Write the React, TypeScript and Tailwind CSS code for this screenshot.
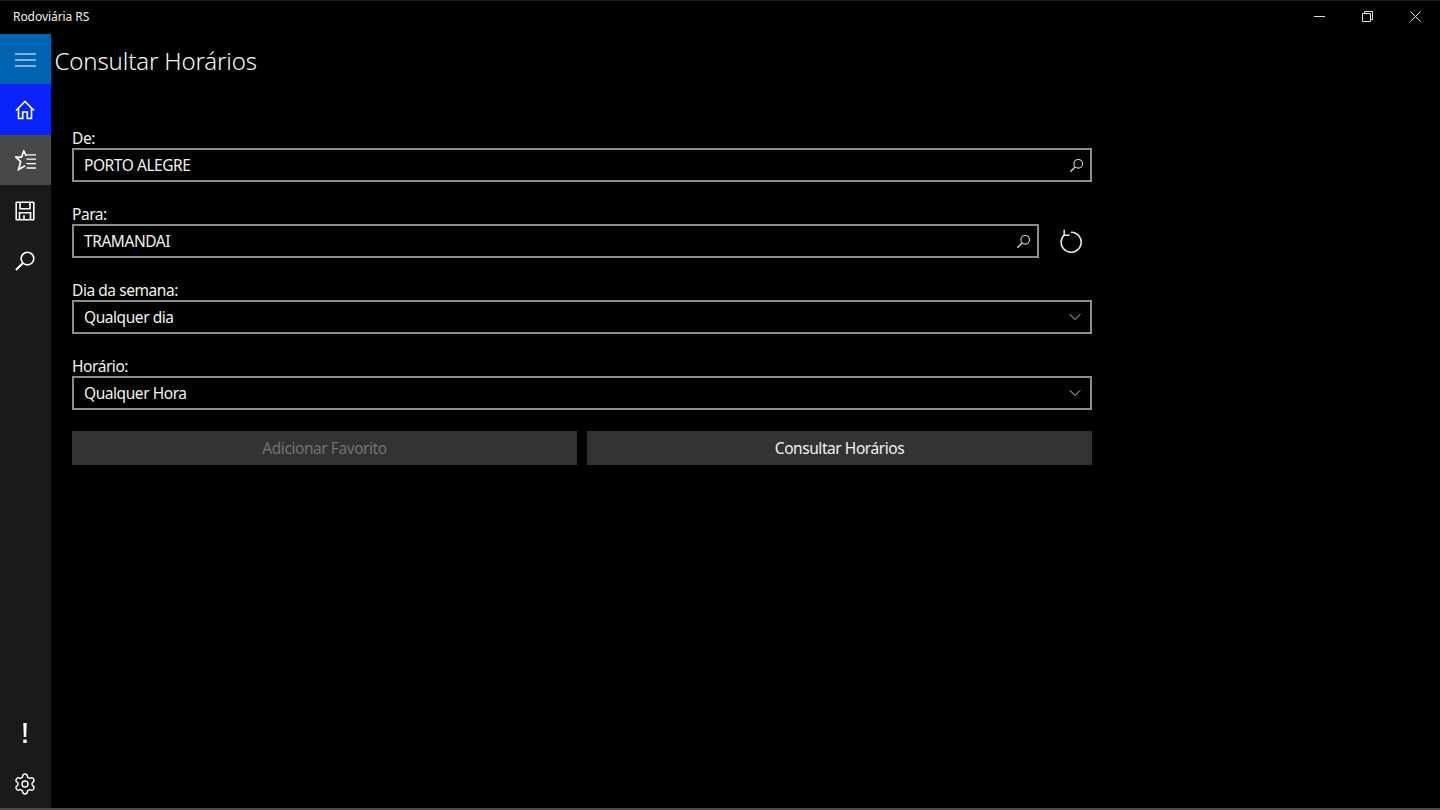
import React from 'react';
import { ChevronDown, Settings } from 'lucide-react';

const font = "font-['Noto_Sans','Open_Sans',sans-serif]";

function SearchGlyph({ size = 16 }: { size?: number }) {
  return (
    <svg width={size} height={size} viewBox="0 0 16 16" fill="none" stroke="currentColor" strokeWidth="1.2">
      <circle cx="9.8" cy="6.2" r="4.6" />
      <path d="M6.5 9.5 1.4 14.6" strokeWidth="1.5" />
    </svg>
  );
}

function NavItem({ bg = '', children }: { bg?: string; children: React.ReactNode }) {
  return <div className={`h-[50.4px] w-full flex items-center justify-center pr-[1px] text-white ${bg}`}>{children}</div>;
}

function Field({ label, value, icon, width = 'w-[1020px]' }: { label: string; value: string; icon: React.ReactNode; width?: string }) {
  return (
    <div className="h-[76px] flex flex-col">
      <label className="h-[22px] text-[15.5px] leading-[22px] text-[#f2f2f2] tracking-[-0.44px] pt-[1px]">{label}</label>
      <div className={`${width} h-[34px] border-2 border-[#8c8c8c] flex items-center justify-between pl-[10px] pr-[5px] text-[15.5px] text-[#f2f2f2] tracking-[-0.44px]`}>
        <span className="pt-[2px]">{value}</span>
        {icon}
      </div>
    </div>
  );
}

export default function App() {
  const chevron = <ChevronDown className="w-[20px] h-[20px] text-[#d0d0d0]" strokeWidth={1.2} />;
  const search = (
    <span className="text-[#d0d0d0] mr-[1px]">
      <SearchGlyph size={15} />
    </span>
  );

  return (
    <div className={`w-[1440px] h-[810px] bg-black flex flex-col overflow-hidden border-t border-[#1c1c1c] border-b-2 border-b-[#4a4a4a] ${font}`}>
      {/* Title bar */}
      <div className="h-[33px] shrink-0 flex items-center justify-between pb-[2px]">
        <span className="pl-[13px] text-[12px] text-[#f0f0f0] tracking-[-0.06px]">Rodoviária RS</span>
        <div className="flex items-center text-[#e0e0e0] pr-[1px]">
          <div className="w-[48px] h-[31px] flex items-center justify-center">
            <svg width="11" height="11" viewBox="0 0 11 11" stroke="currentColor" strokeWidth="1"><path d="M0 5.5h11" /></svg>
          </div>
          <div className="w-[48px] h-[31px] flex items-center justify-center">
            <svg width="11" height="11" viewBox="0 0 11 11" fill="none" stroke="currentColor" strokeWidth="1">
              <path d="M.5 2.5h8v8h-8z" />
              <path d="M2.5 2.5v-2h8v8h-2" />
            </svg>
          </div>
          <div className="w-[48px] h-[31px] flex items-center justify-center">
            <svg width="11" height="11" viewBox="0 0 11 11" stroke="currentColor" strokeWidth="1"><path d="m.3.3 10.4 10.4M10.7.3.3 10.7" /></svg>
          </div>
        </div>
      </div>

      <div className="flex-1 flex min-h-0">
        {/* Sidebar */}
        <div className="w-[51px] shrink-0 bg-[#1a1a1a] flex flex-col justify-between">
          <div className="flex flex-col">
            <NavItem bg="bg-[#0063b1]">
              <svg width="21" height="16" viewBox="0 0 21 16" stroke="currentColor" strokeWidth="1.1" className="mt-[1px]"><path d="M0 2h21M0 8h21M0 14h21" /></svg>
            </NavItem>
            <NavItem bg="bg-[#0a22fa]">
              <svg width="20" height="20" viewBox="0 0 20 20" fill="none" stroke="currentColor" strokeWidth="1.6">
                <path d="M1 10.5 10 1.5l9 9" />
                <path d="M3.5 8.5V18.5h4.2V12h4.6v6.5h4.2V8.5" />
              </svg>
            </NavItem>
            <NavItem bg="bg-[#484848]">
              <svg width="21" height="21" viewBox="0 0 21 21" fill="none" stroke="currentColor" strokeWidth="1.7" className="mt-[1px]">
                <path d="M11.2 6 8.8 1 6.5 7.2H1l4.6 4.4L3.6 19.5l6.5-3.8" />
                <path d="M11.5 4.8h9.5M11.5 9.2h9.5M11.5 13.6h9.5M11.5 18h9.5" strokeWidth="1.3" />
              </svg>
            </NavItem>
            <NavItem>
              <svg width="20" height="20" viewBox="0 0 20 20" fill="none" stroke="currentColor" strokeWidth="1.6" className="mt-[1px]">
                <path d="M1.8 1.2h16.4a.6.6 0 0 1 .6.6v16.4a.6.6 0 0 1-.6.6H1.8a.6.6 0 0 1-.6-.6V1.8a.6.6 0 0 1 .6-.6z" />
                <path d="M5 1.2v6.6h10V1.2M4.5 18.8v-7h11v7M9 14.2v4.6" />
              </svg>
            </NavItem>
            <NavItem>
              <SearchGlyph size={22} />
            </NavItem>
          </div>
          <div className="flex flex-col">
            <NavItem>
              <svg width="6" height="20" viewBox="0 0 6 20" fill="currentColor" className="mt-[2px]"><path d="M1.3 0h3.4l-.5 14H1.8zM1.3 16.5h3.4V20H1.3z" /></svg>
            </NavItem>
            <NavItem>
              <Settings className="w-[24px] h-[24px] mt-[3px]" strokeWidth={1.4} />
            </NavItem>
          </div>
        </div>

        {/* Page */}
        <div className="flex-1 flex flex-col relative">
          <h1 className="pl-[3.5px] pt-[9px] h-[54px] text-[24px] leading-[36px] text-[#f5f5f5] font-light tracking-[-0.15px]">Consultar Horários</h1>
          <div className="pl-[21px] pt-[38px] flex flex-col">
            <Field label="De:" value="PORTO ALEGRE" icon={search} />
            <div className="flex items-start">
              <Field label="Para:" value="TRAMANDAI" icon={search} width="w-[967px]" />
              <div className="ml-[19px] mt-[22px] h-[34px] w-[26px] flex items-center justify-center text-[#e8e8e8]">
                <svg width="24" height="24" viewBox="0 0 24 24" fill="none" stroke="currentColor" strokeWidth="1.6" className="-mt-[1px]">
                  <path d="M5.2 6A10 10 0 1 0 12 3.2" />
                  <path d="M5.2.8V6.2h5.4" strokeWidth="1.5" />
                </svg>
              </div>
            </div>
            <Field label="Dia da semana:" value="Qualquer dia" icon={chevron} />
            <Field label="Horário:" value="Qualquer Hora" icon={chevron} />
            <div className="flex gap-[10px] w-[1020px] mt-[1px]">
              <button className="w-[505px] h-[34px] pt-[2px] bg-[#333333] text-[15.5px] text-[#727272] tracking-[-0.44px]">Adicionar Favorito</button>
              <button className="w-[505px] h-[34px] pt-[2px] bg-[#333333] text-[15.5px] text-[#f2f2f2] tracking-[-0.44px]">Consultar Horários</button>
            </div>
          </div>
          <div className="absolute bottom-[-2px] left-[724px] w-[50px] h-[2px] bg-[#777777]" />
        </div>
      </div>
    </div>
  );
}
